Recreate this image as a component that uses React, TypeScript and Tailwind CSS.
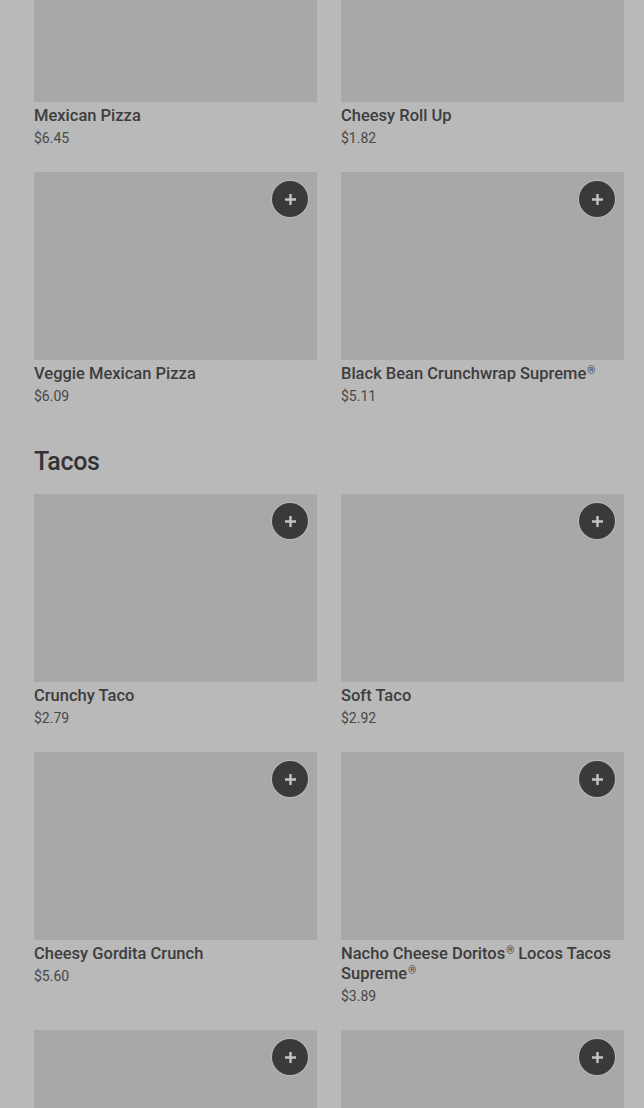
import React from "react";

type Item = { name: React.ReactNode; price: string };

const R = () => (
  <span className="inline-block align-top text-[10px] leading-[12px] ml-[1px] mt-[1px]">®</span>
);

const pizzas: Item[] = [
  { name: "Mexican Pizza", price: "$6.45" },
  { name: "Cheesy Roll Up", price: "$1.82" },
  { name: "Veggie Mexican Pizza", price: "$6.09" },
  { name: <>Black Bean Crunchwrap Supreme<R /></>, price: "$5.11" },
];

const tacos: Item[] = [
  { name: "Crunchy Taco", price: "$2.79" },
  { name: "Soft Taco", price: "$2.92" },
  { name: "Cheesy Gordita Crunch", price: "$5.60" },
  { name: <>Nacho Cheese Doritos<R /> Locos Tacos Supreme<R /></>, price: "$3.89" },
];

function Plus() {
  return (
    <button className="absolute top-[9px] right-[9px] w-9 h-9 rounded-full bg-[#3a3a3a] flex items-center justify-center ring-1 ring-[#c4c4c4]/60">
      <svg width="13" height="13" viewBox="0 0 13 13" fill="none">
        <path d="M6.5 1v11M1 6.5h11" stroke="#c4c4c4" strokeWidth="2.4" />
      </svg>
    </button>
  );
}

function Card({ item }: { item?: Item }) {
  return (
    <div className="flex flex-col">
      <div className="relative h-[188px] bg-[#a8a8a8]">
        <Plus />
      </div>
      {item && (
        <>
          <div className="mt-[4px] text-[16.5px] leading-[20px] font-medium text-[#3d3d3d]">
            {item.name}
          </div>
          <div className="mt-[3px] text-[14px] leading-[18px] text-[#484848]">{item.price}</div>
        </>
      )}
    </div>
  );
}

export default function App() {
  return (
    <div
      className="w-[644px] h-[1108px] overflow-hidden bg-[#b9b9b9]"
      style={{ fontFamily: "Roboto, 'Liberation Sans', sans-serif" }}
    >
      <div className="pl-[34px] pr-[20px] -mt-[86px]">
        <div className="grid grid-cols-2 gap-x-6 gap-y-[25px]">
          {pizzas.map((p, i) => (
            <Card key={i} item={p} />
          ))}
        </div>
        <h2 className="mt-[42px] mb-[17px] text-[25px] leading-[30px] font-medium text-[#333333] tracking-[-0.3px]">
          Tacos
        </h2>
        <div className="grid grid-cols-2 gap-x-6 gap-y-[25px]">
          {tacos.map((p, i) => (
            <Card key={i} item={p} />
          ))}
          <Card />
          <Card />
        </div>
      </div>
    </div>
  );
}
